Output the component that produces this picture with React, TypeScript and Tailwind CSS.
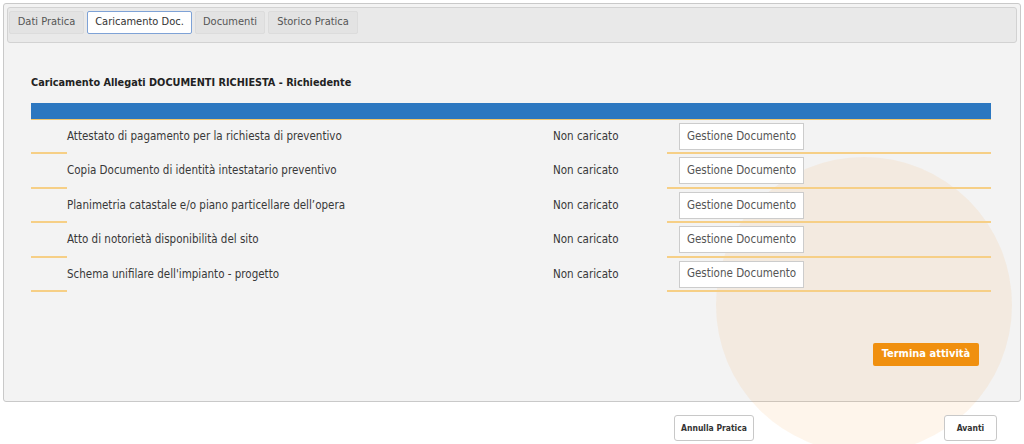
import React from "react";

const rows = [
  "Attestato di pagamento per la richiesta di preventivo",
  "Copia Documento di identità intestatario preventivo",
  "Planimetria catastale e/o piano particellare dell’opera",
  "Atto di notorietà disponibilità del sito",
  "Schema unifilare dell'impianto - progetto",
];

const tabs = [
  { t: "Dati Pratica", w: "w-[75px]" },
  { t: "Caricamento Doc.", w: "w-[105px]" },
  { t: "Documenti", w: "w-[70px]" },
  { t: "Storico Pratica", w: "w-[90px]" },
];

export default function App() {
  return (
    <div
      className="relative h-[444px] w-[1024px] overflow-hidden bg-white text-[#333]"
      style={{ fontFamily: '"DejaVu Sans Condensed", "DejaVu Sans", sans-serif' }}
    >
      {/* panel */}
      <div className="ml-[3px] mt-[3px] flex h-[399px] w-[1018px] flex-col rounded-[3px] border border-[#c9c9c9] bg-[#f3f3f3] p-[3px]">
        {/* tab bar */}
        <div className="relative z-10 flex h-[36px] items-start gap-[3px] rounded-[3px] border border-[#d2d2d2] bg-[#e9e9e9] pl-[1px] pt-[3px]">
          {tabs.map((t, i) => (
            <div
              key={t.t}
              className={
                i === 1
                  ? `flex h-[23px] ${t.w} items-center justify-center rounded-[2px] border border-[#7ea2d6] bg-white text-[11px] text-[#333]`
                  : `flex h-[23px] ${t.w} items-center justify-center rounded-[2px] border border-[#dcdcdc] bg-[#e3e3e3] text-[11px] text-[#555]`
              }
            >
              {t.t}
            </div>
          ))}
        </div>

        <div className="relative z-10 flex flex-1 flex-col pl-[24px] pr-[26px]">
          <div className="mt-[32px] h-[16px] text-[10.8px] font-bold leading-[16px] text-[#222]">
            Caricamento Allegati DOCUMENTI RICHIESTA - Richiedente
          </div>
          <div className="mt-[12px] h-[17px] border-b border-[#f2c56a] bg-[#2c77c0]" />
          {rows.map((r) => (
            <div key={r} className="flex h-[34.4px] items-stretch">
              <div className="w-[36px] border-b-2 border-[#f6cf86]" />
              <div className="flex w-[486px] items-center pb-[1px] text-[11.5px] text-[#383838]">{r}</div>
              <div className="flex w-[114px] items-center pb-[1px] text-[11.5px] text-[#383838]">Non caricato</div>
              <div className="flex flex-1 items-start border-b-2 border-[#f6cf86] pl-[12px] pt-[3px]">
                <div className="flex h-[27px] w-[125px] items-center justify-center border border-[#cccccc] bg-white text-[11.5px] text-[#555]">
                  Gestione Documento
                </div>
              </div>
            </div>
          ))}
          <div className="mt-[51px] flex justify-end pr-[12px]">
            <div className="flex h-[23px] w-[106px] items-center justify-center rounded-[2px] bg-[#f0900f] text-[11px] font-bold text-white">
              Termina attività
            </div>
          </div>
        </div>
      </div>

      {/* bottom buttons */}
      <div className="relative z-10 mt-[13px] flex">
        <div className="ml-[674px] flex h-[26px] w-[80px] items-center justify-center rounded-[3px] border border-[#c8c8c8] bg-white text-[8.5px] font-bold text-[#333]">
          Annulla Pratica
        </div>
        <div className="ml-auto mr-[27px] flex h-[26px] w-[53px] items-center justify-center rounded-[3px] border border-[#c8c8c8] bg-white text-[8.5px] font-bold text-[#333]">
          Avanti
        </div>
      </div>

      {/* watermark circle */}
      <div className="pointer-events-none absolute left-[716px] top-[157px] z-[1] h-[296px] w-[296px] rounded-full bg-[rgba(250,165,70,0.11)]" />
    </div>
  );
}
